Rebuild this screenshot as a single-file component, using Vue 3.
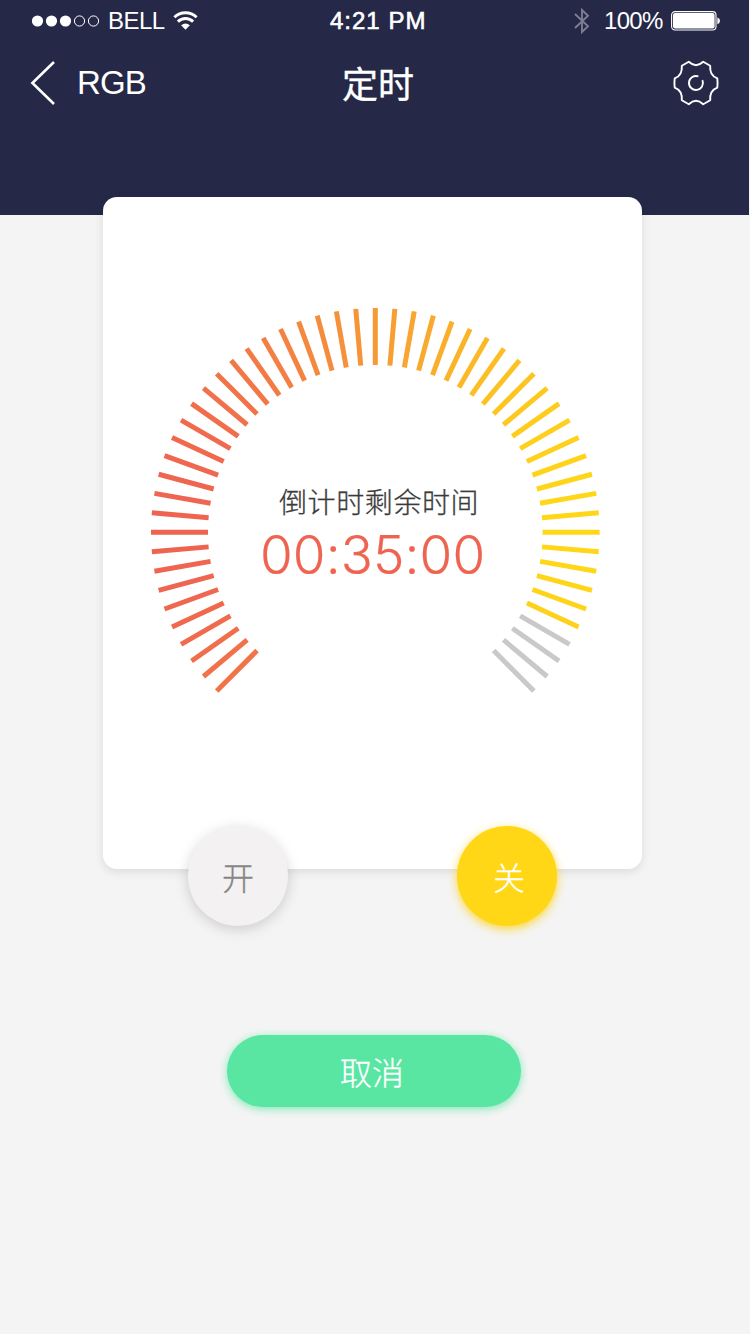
<script setup>
const start = [239, 100, 81]
const middle = [247, 154, 54]
const end = [255, 215, 24]

// Blend between the three dial colours by the tick's horizontal position.
function tickColor(angle) {
  if (angle > 115) return '#c9c9c9'
  const t = Math.sin((angle * Math.PI) / 180)
  const [from, to, k] = t < 0 ? [start, middle, t + 1] : [middle, end, t]
  return `rgb(${from.map((c, i) => Math.round(c + (to[i] - c) * k)).join(',')})`
}

const ticks = Array.from({ length: 55 }, (_, i) => {
  const angle = -135 + i * 5
  return { angle, color: tickColor(angle) }
})
</script>

<template>
  <div class="screen">
    <header class="header">
      <div class="status">
        <div class="carrier">
          <svg width="68" height="14" viewBox="0 0 68 14">
            <circle v-for="n in 3" :key="n" :cx="n * 14 - 8.5" cy="7" r="5.6" fill="#fff" />
            <circle cx="47.5" cy="7" r="5.1" fill="none" stroke="#fff" />
            <circle cx="61.5" cy="7" r="5.1" fill="none" stroke="#fff" />
          </svg>
          <span class="bell">BELL</span>
          <svg width="26" height="20" viewBox="0 0 26 20" fill="none" stroke="#fff" stroke-width="2.9">
            <path d="M1.4 6.2A16 16 0 0 1 23.6 6.2" />
            <path d="M4.9 10.6A10.8 10.8 0 0 1 20.1 10.6" />
            <path d="M12.5 18.8L8.1 14.2Q12.5 10.6 16.9 14.2Z" fill="#fff" stroke="none" />
          </svg>
        </div>
        <div class="clock">4:21 PM</div>
        <div class="power">
          <svg width="18" height="28" viewBox="0 0 18 28" fill="none" stroke="#7c7e92" stroke-width="1.9">
            <path d="M2 7L15 19.3L9 25V3L15 8.7L2 21" />
          </svg>
          <span class="percent">100%</span>
          <svg width="50" height="20" viewBox="0 0 50 20">
            <rect x=".6" y=".6" width="44.4" height="18.4" rx="3.4" fill="none" stroke="#fff" stroke-width="1.1" />
            <rect x="2" y="2" width="41.6" height="15.6" rx="2" fill="#fff" />
            <path d="M46.4 6.4Q49 7 49 9.8T46.4 13.2Z" fill="#fff" />
          </svg>
        </div>
      </div>
      <nav class="nav">
        <div class="back">
          <svg width="28" height="46" viewBox="0 0 28 46" fill="none" stroke="#fff" stroke-width="2.6">
            <path d="M24 2L2.4 23L24 44" />
          </svg>
          <span>RGB</span>
        </div>
        <h1 class="title">定时</h1>
        <svg class="gear" width="46" height="46" viewBox="-23 -23 46 46" fill="none" stroke="#fff" stroke-width="1.9" stroke-linejoin="round">
          <path d="M-7.2 -21.2Q0 -14.4 7.2 -21.2L14.2 -17.2Q13.4 -7.6 21.3 -4.6Q21.9 0 21.3 4.6Q13.4 7.6 14.2 17.2L7.2 21.2Q0 14.4 -7.2 21.2L-14.2 17.2Q-13.4 7.6 -21.3 4.6Q-21.9 0 -21.3 -4.6Q-13.4 -7.6 -14.2 -17.2Z" />
          <path d="M2.4 -6.6A7 7 0 1 0 6.4 -2.8" />
        </svg>
      </nav>
    </header>

    <main class="content">
      <section class="card">
        <div class="dial">
          <svg width="460" height="460" viewBox="-230.3 -230.3 460 460">
            <line
              v-for="tick in ticks"
              :key="tick.angle"
              x1="0"
              y1="-224.3"
              x2="0"
              y2="-167.3"
              :stroke="tick.color"
              stroke-width="5"
              :transform="`rotate(${tick.angle})`"
            />
          </svg>
          <div class="readout">
            <p class="label">倒计时剩余时间</p>
            <p class="time">00:35:00</p>
          </div>
        </div>
      </section>
      <div class="switches">
        <button class="round on">开</button>
        <button class="round off">关</button>
      </div>
      <button class="cancel">取消</button>
    </main>
  </div>
</template>

<style>
body {
  background: #f4f4f4;
}
</style>

<style scoped>
.screen {
  width: 750px;
  height: 1334px;
  overflow: hidden;
  background: #f4f4f4;
  font-family: "Liberation Sans", "Noto Sans CJK SC", sans-serif;
  color: #fff;
}

.screen svg {
  display: block;
  flex: none;
}

.header {
  width: 749px;
  height: 215px;
  background: #252947;
}

.status {
  display: grid;
  grid-template-columns: 330px 1fr 176px;
  align-items: center;
  height: 41px;
  font-size: 24px;
  white-space: nowrap;
}

.carrier {
  display: flex;
  align-items: center;
  padding-left: 32px;
}

.bell {
  margin: 0 8px;
  letter-spacing: -0.5px;
}

.clock {
  font-family: "Liberation Sans", sans-serif;
  letter-spacing: 1px;
  -webkit-text-stroke: 0.6px #fff;
}

.power {
  display: flex;
  align-items: center;
}

.percent {
  margin: 0 8px 0 13px;
  letter-spacing: -0.7px;
}

.nav {
  display: grid;
  grid-template-columns: 342px 1fr 76px;
  align-items: center;
  height: 84px;
}

.back {
  display: flex;
  align-items: center;
  gap: 19px;
  padding-left: 30px;
  font-size: 33px;
  letter-spacing: -0.9px;
}

.title {
  margin: 0;
  padding-bottom: 2px;
  font: 400 36px/50px "Noto Sans CJK SC", sans-serif;
  -webkit-text-stroke: 0.4px #fff;
}

.content {
  display: flex;
  flex-direction: column;
  align-items: center;
  width: 745px;
}

.card {
  display: flex;
  justify-content: center;
  box-sizing: border-box;
  width: 539px;
  height: 672px;
  margin-top: -18px;
  padding-top: 105px;
  background: #fff;
  border-radius: 14px;
  box-shadow: 0 3px 10px rgba(0, 0, 0, 0.1);
}

.dial {
  position: relative;
  width: 460px;
  height: 460px;
  margin-left: 5px;
}

.readout {
  position: absolute;
  top: 178px;
  left: 0;
  width: 100%;
}

.readout p {
  margin: 0;
  white-space: nowrap;
}

.label {
  padding-left: 134px;
  color: #3b3b3b;
  font: 300 28px/42px "Noto Sans CJK SC", sans-serif;
  letter-spacing: 0.6px;
  -webkit-text-stroke: 0.3px #3b3b3b;
}

.time {
  padding: 2px 0 0 115px;
  color: #ef6450;
  font: 300 53px/62px Inter, sans-serif;
  letter-spacing: 0.1px;
  -webkit-text-stroke: 0.2px #ef6450;
}

.switches {
  position: relative;
  display: flex;
  gap: 169px;
  margin-top: -43px;
}

.round,
.cancel {
  padding: 0;
  border: 0;
  color: #fff;
  font: 300 32px/1 "Noto Sans CJK SC", sans-serif;
  -webkit-text-stroke: 0.3px currentColor;
}

.round {
  width: 100px;
  height: 100px;
  border-radius: 50%;
}

.on {
  background: #f3f1f2;
  color: #858585;
  box-shadow: 0 3px 14px rgba(0, 0, 0, 0.17);
}

.off {
  padding-left: 4px;
  background: #ffd717;
  box-shadow: 0 3px 10px rgba(255, 208, 10, 0.8);
}

.cancel {
  width: 294px;
  height: 72px;
  margin: 109px 0 0 3px;
  padding: 0 4px 1px 0;
  border-radius: 36px;
  background: #58e6a2;
  box-shadow: 0 2px 9px rgba(88, 230, 162, 0.75);
}
</style>
